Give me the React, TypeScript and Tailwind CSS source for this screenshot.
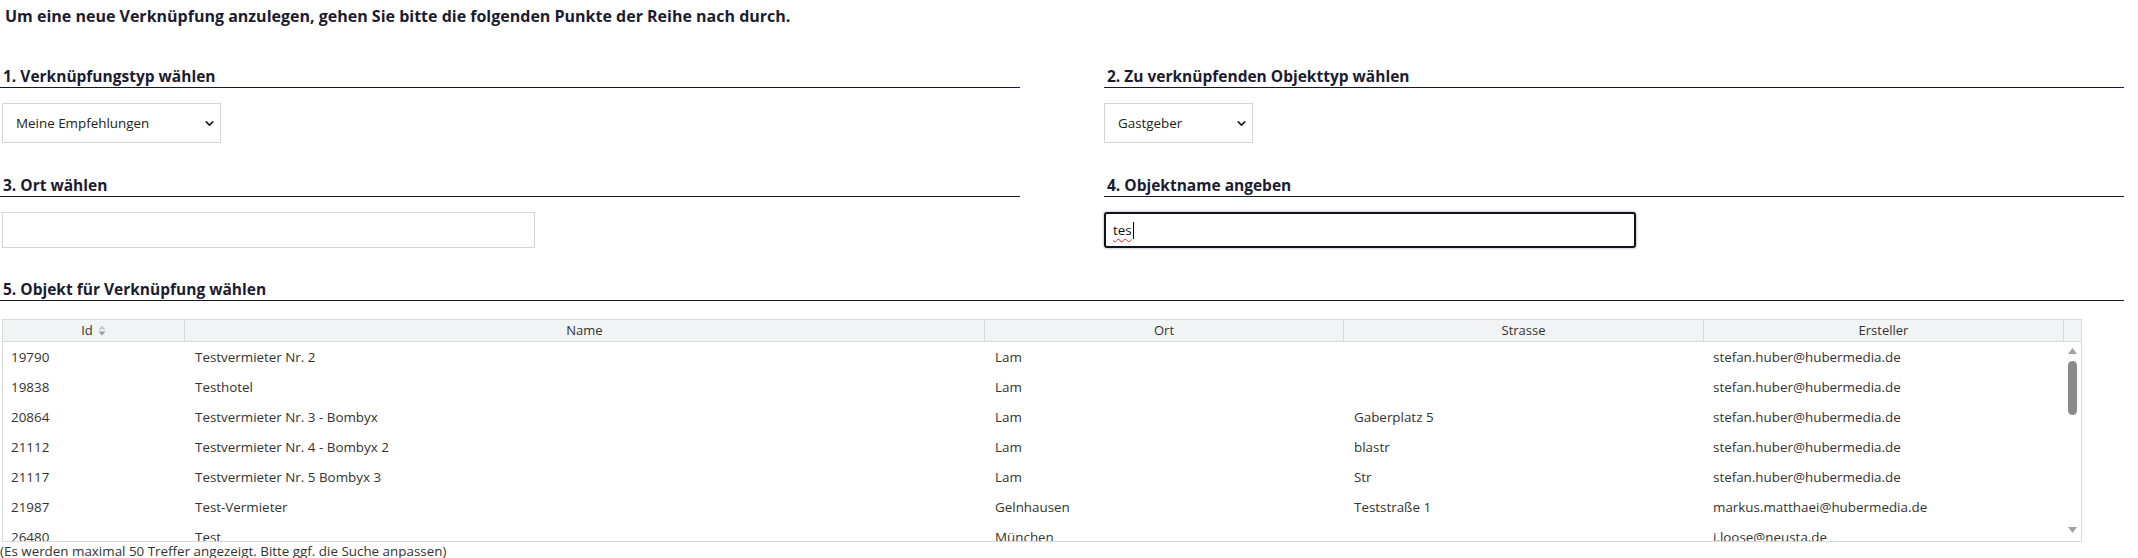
import { ChevronDown } from "lucide-react";

interface Row {
  id: string;
  name: string;
  ort: string;
  strasse: string;
  ersteller: string;
}

const rows: Row[] = [
  { id: "19790", name: "Testvermieter Nr. 2", ort: "Lam", strasse: "", ersteller: "stefan.huber@hubermedia.de" },
  { id: "19838", name: "Testhotel", ort: "Lam", strasse: "", ersteller: "stefan.huber@hubermedia.de" },
  { id: "20864", name: "Testvermieter Nr. 3 - Bombyx", ort: "Lam", strasse: "Gaberplatz 5", ersteller: "stefan.huber@hubermedia.de" },
  { id: "21112", name: "Testvermieter Nr. 4 - Bombyx 2", ort: "Lam", strasse: "blastr", ersteller: "stefan.huber@hubermedia.de" },
  { id: "21117", name: "Testvermieter Nr. 5 Bombyx 3", ort: "Lam", strasse: "Str", ersteller: "stefan.huber@hubermedia.de" },
  { id: "21987", name: "Test-Vermieter", ort: "Gelnhausen", strasse: "Teststraße 1", ersteller: "markus.matthaei@hubermedia.de" },
  { id: "26480", name: "Test", ort: "München", strasse: "", ersteller: "j.loose@neusta.de" },
];

function SectionTitle({ children }: { children: React.ReactNode }) {
  return (
    <h2 className="border-b border-[#16172a] pl-[3px] text-[15.5px] leading-[22px] font-bold text-[#1b1c30]">
      {children}
    </h2>
  );
}

function FakeSelect({ value, width }: { value: string; width: string }) {
  return (
    <div
      className={`${width} mt-[15px] flex h-[40px] items-center justify-between border border-[#d3d5d8] bg-white pr-[4px] pl-[13px] text-[13.4px] text-[#222]`}
    >
      <span>{value}</span>
      <ChevronDown size={13} strokeWidth={3.2} className="text-[#222]" />
    </div>
  );
}

function SortIcon() {
  return (
    <svg width="8" height="11" viewBox="0 0 8 11" className="ml-[5px] inline-block">
      <path d="M4 0.5 L7.5 4.5 L0.5 4.5 Z" fill="#c4c6ca" />
      <path d="M4 10.5 L7.5 6.5 L0.5 6.5 Z" fill="#9a9ca0" />
    </svg>
  );
}

export default function App() {
  return (
    <div className="w-[2138px] h-[558px] overflow-hidden bg-white font-['Open_Sans',sans-serif] text-[#333]">
      <div className="w-[2124px]">
        <p className="pt-[5px] pl-[5px] text-[16px] leading-[22px] font-bold text-[#1b1c30]">
          Um eine neue Verknüpfung anzulegen, gehen Sie bitte die folgenden Punkte der Reihe nach durch.
        </p>

        <div className="mt-[38px] grid grid-cols-2 gap-x-[84px]">
          <div>
            <SectionTitle>1. Verknüpfungstyp wählen</SectionTitle>
            <div className="pl-[2px]">
              <FakeSelect value="Meine Empfehlungen" width="w-[219px]" />
            </div>
          </div>
          <div>
            <SectionTitle>2. Zu verknüpfenden Objekttyp wählen</SectionTitle>
            <FakeSelect value="Gastgeber" width="w-[149px]" />
          </div>

          <div className="mt-[31px]">
            <SectionTitle>3. Ort wählen</SectionTitle>
            <div className="pl-[2px]">
              <div className="mt-[15px] h-[36px] w-[533px] border border-[#d3d5d8] bg-white" />
            </div>
          </div>
          <div className="mt-[31px]">
            <SectionTitle>4. Objektname angeben</SectionTitle>
            <div className="mt-[15px] flex h-[36px] w-[532px] items-center rounded-[3px] border-2 border-[#11121c] bg-white pl-[7px] text-[13.4px] text-[#111] shadow-[0_0_2px_1px_rgba(0,0,0,0.18)]">
              <span className="underline decoration-[#e02020] decoration-wavy decoration-1 underline-offset-[3px]">tes</span>
              <span className="ml-[1px] h-[17px] w-[1px] bg-black" />
            </div>
          </div>
        </div>

        <div className="mt-[30px]">
          <SectionTitle>5. Objekt für Verknüpfung wählen</SectionTitle>
        </div>

        <div className="mt-[18px] ml-[2px] w-[2080px] border-x border-t border-[#d6d8dc] text-[13.4px]">
          <div className="flex h-[22px] border-b border-[#d6d8dc] bg-[#f2f3f5] text-[13px] text-[#333]">
            <div className="flex w-[182px] items-center justify-center border-r border-[#d6d8dc]">
              Id
              <SortIcon />
            </div>
            <div className="flex w-[800px] items-center justify-center border-r border-[#d6d8dc]">Name</div>
            <div className="flex w-[359px] items-center justify-center border-r border-[#d6d8dc]">Ort</div>
            <div className="flex w-[360px] items-center justify-center border-r border-[#d6d8dc]">Strasse</div>
            <div className="flex w-[360px] items-center justify-center border-r border-[#d6d8dc]">Ersteller</div>
            <div className="flex-1" />
          </div>

          <div className="flex h-[200px] border-b border-[#d6d8dc]">
            <div className="w-[2061px] overflow-hidden">
              {rows.map((r) => (
                <div key={r.id} className="flex h-[30px] items-center text-[#333]">
                  <div className="w-[182px] pl-[8px]">{r.id}</div>
                  <div className="w-[800px] pl-[10px]">{r.name}</div>
                  <div className="w-[359px] pl-[10px]">{r.ort}</div>
                  <div className="w-[360px] pl-[10px]">{r.strasse}</div>
                  <div className="w-[360px] pl-[9px]">{r.ersteller}</div>
                </div>
              ))}
            </div>
            <div className="flex flex-1 flex-col items-center pt-[6px] pb-[8px]">
              <svg width="9" height="6" viewBox="0 0 9 6">
                <path d="M4.5 0 L9 6 L0 6 Z" fill="#a3a3a3" />
              </svg>
              <div className="mt-[7px] h-[54px] w-[9px] rounded-full bg-[#8a8a8a]" />
              <div className="flex-1" />
              <svg width="9" height="6" viewBox="0 0 9 6">
                <path d="M0 0 L9 0 L4.5 6 Z" fill="#a3a3a3" />
              </svg>
            </div>
          </div>
        </div>

        <p className="text-[13.4px] leading-[18px] text-[#333]">
          (Es werden maximal 50 Treffer angezeigt. Bitte ggf. die Suche anpassen)
        </p>
      </div>
    </div>
  );
}
